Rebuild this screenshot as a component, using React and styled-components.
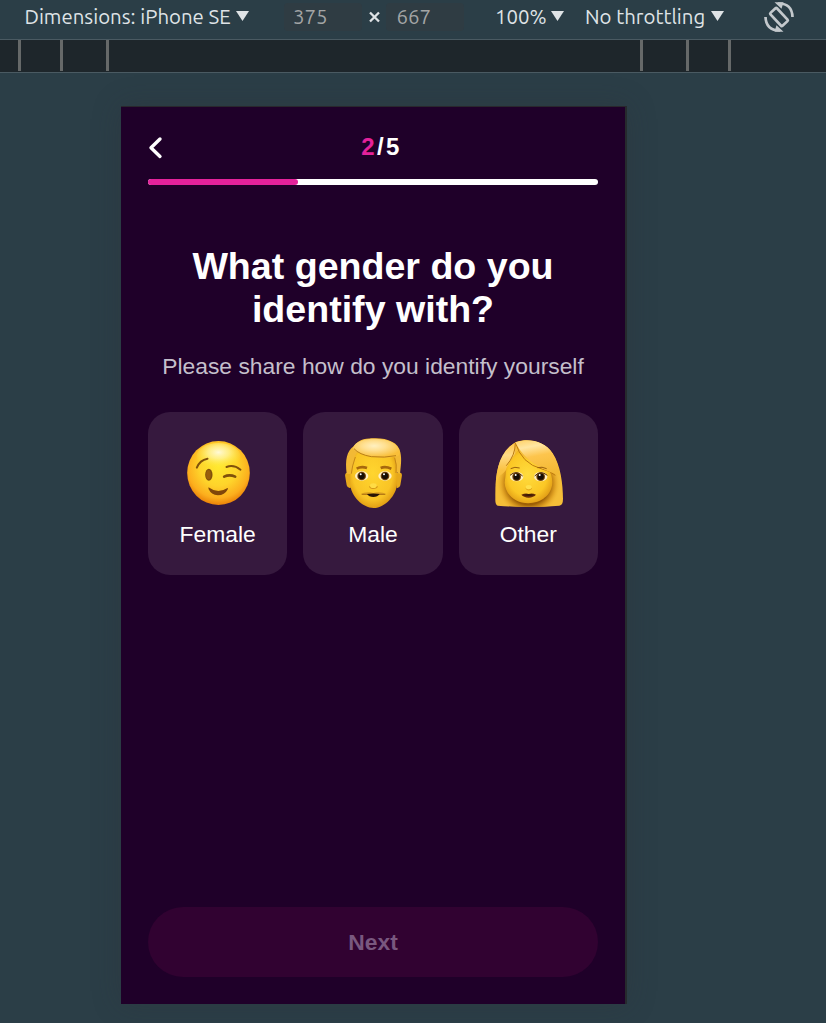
import React from "react";
import styled, { createGlobalStyle } from "styled-components";

const GlobalStyle = createGlobalStyle`
  * { box-sizing: border-box; }
  body { margin: 0; background: #2b3e47; }
`;

const Page = styled.div`
  display: flex;
  flex-direction: column;
  width: 826px;
  height: 1023px;
  overflow: hidden;
  background: #2b3e47;
  font-family: "Liberation Sans", Arial, sans-serif;
`;

const Toolbar = styled.div`
  display: flex;
  align-items: flex-start;
  height: 39px;
  flex: none;
  padding-left: 24.5px;
  font-family: "Ubuntu", "Noto Sans", sans-serif;
  font-size: 20.4px;
  line-height: 34px;
  color: #dfe3e6;
  white-space: nowrap;
`;

const Item = styled.div`
  flex: none;
  width: ${(p) => p.$width}px;
  margin-left: ${(p) => p.$gap || 0}px;
`;

const SizeField = styled(Item)`
  height: 28px;
  margin-top: 3px;
  padding-left: ${(p) => p.$inset}px;
  line-height: 28px;
  border-radius: 4px;
  background: #2f3c43;
  color: #a3a5a6;
`;

const Caret = styled.span`
  flex: none;
  width: 13px;
  height: 10px;
  margin: 11px 0 0 ${(p) => p.$gap}px;
  background: #dfe3e6;
  clip-path: polygon(0 0, 100% 0, 50% 100%);
`;

const Cross = styled.svg`
  flex: none;
  margin: 11px 0 0 3px;
`;

const RotateIcon = styled.svg`
  flex: none;
  margin: 1px 0 0 39px;
`;

const Ruler = styled.div`
  display: flex;
  flex: none;
  height: 34px;
  background: #1e262b;
  border-top: 1px solid #4a5a62;
  border-bottom: 1px solid #4a5a62;
`;

const Tick = styled.span`
  flex: none;
  width: 3px;
  height: 31px;
  margin-left: ${(p) => p.$gap}px;
  background: #666969;
`;

const Stage = styled.div`
  flex: 1;
  padding: 33px 0 0 121px;
`;

const Phone = styled.main`
  display: flex;
  flex-direction: column;
  width: 506px;
  height: 898px;
  padding: 24px 27px 27px;
  background: #1f0029;
  border-top: 1px solid #29272d;
  border-right: 2px solid #262a2d;
  box-shadow: 0 0 27px rgba(48, 48, 52, 0.3);
  color: #fff;
`;

const Header = styled.header`
  display: flex;
  align-items: center;
  height: 32px;
`;

const Counter = styled.div`
  flex: 1;
  text-align: center;
  font-size: 24px;
  line-height: 32px;
  font-weight: 700;
  letter-spacing: 2.4px;
  padding-left: 2px;
`;

const Current = styled.span`
  color: #e4229b;
`;

const Progress = styled.div`
  flex: none;
  height: 6px;
  margin-top: 16px;
  border-radius: 3px;
  background: #fff;
`;

const ProgressFill = styled.div`
  width: 150px;
  height: 6px;
  border-radius: 3px;
  background: #e4229b;
`;

const Title = styled.h1`
  margin: 60px 0 0;
  font-size: 37.6px;
  line-height: 43px;
  font-weight: 700;
  text-align: center;
`;

const Subtitle = styled.p`
  margin: 22px 0 0;
  font-size: 22.85px;
  line-height: 26px;
  text-align: center;
  white-space: nowrap;
  color: #c4bfcb;
`;

const Options = styled.div`
  display: grid;
  grid-template-columns: repeat(3, 1fr);
  gap: 16px;
  margin-top: 33px;
`;

const Option = styled.button`
  display: flex;
  flex-direction: column;
  align-items: center;
  height: 163px;
  padding: 13px 0 0;
  border: 0;
  border-radius: 22px;
  background: #36193e;
  color: #fff;
  font: 22.85px/26px "Liberation Sans", Arial, sans-serif;
`;

const Face = styled.svg`
  display: block;
  flex: none;
  width: 90px;
  height: 90px;
  margin-bottom: 6px;
`;

const NextButton = styled.button`
  height: 70px;
  margin-top: auto;
  border: 0;
  border-radius: 35px;
  background: #310231;
  color: #79587f;
  font: 700 22.85px/26px "Liberation Sans", Arial, sans-serif;
`;

function WinkFace() {
  return (
    <Face viewBox="-6.5 0 270 270">
      <defs>
        <radialGradient id="winkEdge" cx=".5" cy=".4" r=".6">
          <stop offset="0" stopColor="#ffe92e" />
          <stop offset=".5" stopColor="#fed42b" />
          <stop offset=".82" stopColor="#fcae1d" />
          <stop offset="1" stopColor="#ea8108" />
        </radialGradient>
        <radialGradient id="winkShine" cx=".5" cy=".35" r=".6">
          <stop offset="0" stopColor="#fffbe0" stopOpacity=".95" />
          <stop offset=".4" stopColor="#fff7a8" stopOpacity=".7" />
          <stop offset="1" stopColor="#ffe92e" stopOpacity="0" />
        </radialGradient>
      </defs>
      <ellipse cx="130" cy="144" rx="94" ry="96" fill="url(#winkEdge)" />
      <ellipse cx="130" cy="94" rx="66" ry="40" fill="url(#winkShine)" />
      <g fill="none" stroke="#80510b" strokeLinecap="round">
        <path d="M65 128Q74 105 97 101" strokeWidth="6" />
        <path d="M154 126Q176 118 196 134" strokeWidth="6" />
        <path d="M147 155Q163 147 180 155" strokeWidth="8" />
      </g>
      <ellipse cx="101" cy="149" rx="11" ry="18" fill="#80510b" />
      <ellipse cx="100" cy="149" rx="7" ry="14" fill="#985f0c" />
      <path d="M100 187Q128 208 157 189Q160 190 157 194Q149 210 128 211Q108 209 100 192Z" fill="#80460a" />
    </Face>
  );
}

function Eye({ x, y }) {
  return (
    <g>
      <ellipse cx={x} cy={y} rx="20" ry="14" fill="#fff0c3" />
      <circle cx={x} cy={y} r="13" fill="#74430b" />
      <circle cx={x} cy={y} r="9.5" fill="#160e05" />
      <circle cx={x - 3} cy={y - 5} r="3" fill="#fff" />
    </g>
  );
}

function ManFace() {
  return (
    <Face viewBox="-6 0 270 270">
      <defs>
        <radialGradient id="manSkin" cx=".48" cy=".44" r=".59">
          <stop offset="0" stopColor="#ffd52f" />
          <stop offset=".72" stopColor="#f9c425" />
          <stop offset="1" stopColor="#dc9611" />
        </radialGradient>
        <radialGradient id="manHair" cx=".45" cy=".38" r=".6">
          <stop offset="0" stopColor="#fff0c0" />
          <stop offset=".4" stopColor="#ffe092" />
          <stop offset="1" stopColor="#f9bf39" />
        </radialGradient>
      </defs>
      <path d="M52 143Q43 143 46 157L50 181Q53 191 62 189L71 144ZM210 143Q218 143 215 157L211 181Q208 191 200 189L195 144Z" fill="#e6a91c" />
      <path d="M61 105Q67 61 130 60Q193 60 201 105V176C201 208 165 249 131 249C97 249 61 211 61 177Z" fill="url(#manSkin)" />
      <path d="M50 146C45 105 50 79 71 64C88 41 112 40 134 40C171 39 206 52 211 82C216 103 212 128 210 147L200 142Q203 115 192 95Q133 104 83 80Q74 89 70 112L62 147Z" fill="#f2b935" />
      <path d="M69 68C76 48 106 41 134 41C169 41 199 52 208 74Q213 86 204 93Q179 100 144 97Q105 95 83 82Q71 76 69 68Z" fill="url(#manHair)" />
      <path d="M72 71Q88 89 124 95Q165 99 198 92" fill="none" stroke="#b97e14" strokeWidth="3" />
      <path d="M64 146Q66 124 76 96M198 144Q201 118 194 98" fill="none" stroke="#c5861a" strokeWidth="3" />
      <path d="M80 131Q94 123 111 129M152 129Q166 123 184 131" fill="none" stroke="#a7680d" strokeWidth="8" />
      <Eye x={95} y={153} />
      <Eye x={165} y={153} />
      <path d="M117 184Q119 193 130 192Q142 192 144 184" fill="#d69817" />
      <ellipse cx="130" cy="182" rx="10" ry="7" fill="#ffdc45" />
      <path d="M93 207Q102 200 121 202L130 204L139 202Q158 200 168 207Q155 211 130 208Q107 211 93 207Z" fill="#daa021" />
      <path d="M95 208H166" stroke="#ad7012" strokeWidth="3" />
      <path d="M111 207Q130 204 149 207Q143 216 130 216Q117 216 111 207Z" fill="#281505" />
    </Face>
  );
}

function WomanFace() {
  return (
    <Face viewBox="-5 0 270 270">
      <defs>
        <radialGradient id="womanSkin" cx=".48" cy=".45" r=".59">
          <stop offset="0" stopColor="#ffdc3d" />
          <stop offset=".7" stopColor="#fbc725" />
          <stop offset="1" stopColor="#e09a15" />
        </radialGradient>
        <linearGradient id="womanLeft" x1=".5" x2=".5" y2="1">
          <stop offset="0" stopColor="#ffc442" />
          <stop offset=".3" stopColor="#ffdb87" />
          <stop offset=".65" stopColor="#fac141" />
          <stop offset="1" stopColor="#f5be38" />
        </linearGradient>
        <linearGradient id="womanRight" x1=".25" x2=".5" y2="1">
          <stop offset="0" stopColor="#ffd571" />
          <stop offset=".2" stopColor="#ffe6a3" />
          <stop offset=".48" stopColor="#fdc54d" />
          <stop offset="1" stopColor="#f3b934" />
        </linearGradient>
        <radialGradient id="womanShade" gradientUnits="userSpaceOnUse" cx="132" cy="176" r="96">
          <stop offset=".66" stopColor="#9d5f05" />
          <stop offset=".82" stopColor="#d6941a" stopOpacity=".75" />
          <stop offset="1" stopColor="#f5bd35" stopOpacity="0" />
        </radialGradient>
        <clipPath id="womanOutline">
          <path d="M94 51C129 38 181 47 204 85C228 121 235 178 235 222Q235 241 224 242Q134 249 39 242Q31 239 32 220C31 143 41 82 94 51Z" />
        </clipPath>
      </defs>
      <g clipPath="url(#womanOutline)">
        <rect x="30" y="40" width="210" height="210" fill="#f5be38" />
        <rect x="30" y="130" width="210" height="120" fill="url(#womanShade)" />
        <path d="M94 51C46 66 32 130 33 182Q37 164 47 151Q58 145 75 121Q93 94 94 51Z" fill="url(#womanLeft)" />
        <path d="M65 130Q80 97 99 77Q119 102 153 112C189 123 202 138 203 172C202 212 168 234 131 235C92 234 62 209 60 173Z" fill="url(#womanSkin)" />
        <path d="M92 54Q92 91 65 122" fill="none" stroke="#b8780e" strokeWidth="3" />
        <path d="M92 52Q110 116 172 132Q197 137 212 151" fill="none" stroke="#bd7a0e" strokeWidth="3" />
        <path d="M92 52C126 37 180 45 203 83Q220 111 226 150C184 139 127 119 92 52Z" fill="url(#womanRight)" />
      </g>
      <path d="M78 131Q90 124 105 129M158 128Q172 124 186 131" fill="none" stroke="#99600e" strokeWidth="3" />
      <Eye x={96} y={155} />
      <Eye x={168} y={155} />
      <path d="M76 151Q94 134 114 153M150 153Q168 134 188 151" fill="none" stroke="#553006" strokeWidth="3" />
      <path d="M123 190Q132 200 142 190" fill="none" stroke="#dca01c" strokeWidth="3" />
      <ellipse cx="132" cy="186" rx="9" ry="6" fill="#ffe04c" />
      <path d="M110 209Q124 203 132 207Q142 203 154 209Q147 217 132 218Q117 217 110 209Z" fill="#6b2f08" />
      <path d="M113 210Q132 206 151 210Q133 214 113 210Z" fill="#2d1405" />
    </Face>
  );
}

export default function App() {
  return (
    <Page>
      <GlobalStyle />
      <Toolbar>
        <Item $width={206.5}>Dimensions: iPhone SE</Item>
        <Caret $gap={5} />
        <SizeField $width={78} $gap={35} $inset={9}>375</SizeField>
        <Cross width="20" height="14" viewBox="0 0 20 14">
          <path d="M5 1.5L14 10.5M14 1.5L5 10.5" stroke="#dfe3e6" strokeWidth="2.3" />
        </Cross>
        <SizeField $width={78} $gap={1} $inset={10.6}>667</SizeField>
        <Item $width={52} $gap={31}>100%</Item>
        <Caret $gap={4} />
        <Item $width={121} $gap={21}>No throttling</Item>
        <Caret $gap={5} />
        <RotateIcon width="32" height="32" viewBox="0 0 32 32" fill="none" stroke="#c3c8cc" strokeWidth="2.7">
          <rect x="11.6" y="7.2" width="8.8" height="17.6" rx="1" transform="rotate(-43 16 16)" />
          <path d="M15 2.5Q29 2 29.5 16M2.5 16Q3 29.5 17 29.5" />
          <path d="M11.5 1.3H20.5L18.5 7.8ZM20.5 30.7H11.5L13.5 24.2Z" fill="#c3c8cc" stroke="none" />
        </RotateIcon>
      </Toolbar>
      <Ruler>
        <Tick $gap={18} />
        <Tick $gap={39} />
        <Tick $gap={43} />
        <Tick $gap={531} />
        <Tick $gap={43} />
        <Tick $gap={39} />
      </Ruler>
      <Stage>
        <Phone>
          <Header>
            <svg width="15" height="24" viewBox="0 0 15 24" fill="none" stroke="#fff" strokeWidth="3.4" strokeLinecap="round" strokeLinejoin="round">
              <path d="M12 4L3 12.8L12 21.4" />
            </svg>
            <Counter>
              <Current>2</Current>/5
            </Counter>
          </Header>
          <Progress>
            <ProgressFill />
          </Progress>
          <Title>What gender do you identify with?</Title>
          <Subtitle>Please share how do you identify yourself</Subtitle>
          <Options>
            <Option><WinkFace />Female</Option>
            <Option><ManFace />Male</Option>
            <Option><WomanFace />Other</Option>
          </Options>
          <NextButton>Next</NextButton>
        </Phone>
      </Stage>
    </Page>
  );
}
